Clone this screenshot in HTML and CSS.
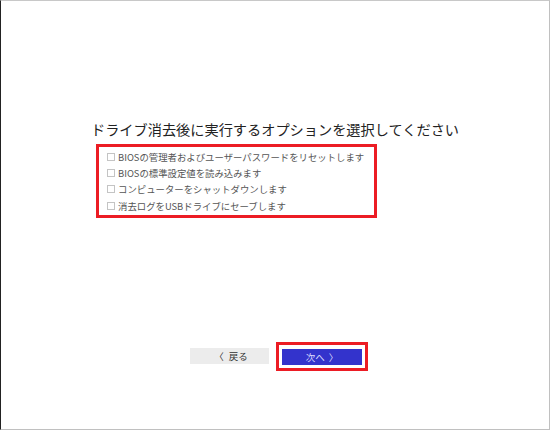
FILE: index.html
```html
<!DOCTYPE html>
<html lang="ja">
<head>
<meta charset="utf-8">
<link rel="stylesheet" href="styles.css">
</head>
<body>
<div class="screen">
  <h1 class="title">ドライブ消去後に実行するオプションを選択してください</h1>
  <div class="options">
    <label class="opt"><span class="box"></span><span>BIOSの管理者およびユーザーパスワードをリセットします</span></label>
    <label class="opt"><span class="box"></span><span>BIOSの標準設定値を読み込みます</span></label>
    <label class="opt"><span class="box"></span><span>コンピューターをシャットダウンします</span></label>
    <label class="opt"><span class="box"></span><span>消去ログをUSBドライブにセーブします</span></label>
  </div>
  <div class="actions">
    <div class="btn back"><span class="chev-l">〈</span>戻る</div>
    <div class="frame"><div class="btn next">次へ<span class="chev-r">〉</span></div></div>
  </div>
</div>
</body>
</html>
```
FILE: styles.css
```css
html, body {
  margin: 0;
  padding: 0;
  background: #ffffff;
}
.screen {
  width: 550px;
  height: 430px;
  box-sizing: border-box;
  border-top: 1px solid #c8c8c8;
  border-right: 1px solid #c0c0c0;
  border-bottom: 1px solid #c0c0c0;
  border-left: 1px solid #222222;
  font-family: "Noto Sans CJK JP", "Noto Sans", sans-serif;
  display: flex;
  flex-direction: column;
}
.title {
  margin: 118px 0 0 0;
  font-size: 14.2px;
  line-height: 20px;
  font-weight: normal;
  color: #222222;
  text-align: center;
}
.options {
  margin: 5px 0 0 95px;
  width: 267px;
  border: 3px solid #ec1c24;
  padding: 1.5px 0 1px 8px;
  display: flex;
  flex-direction: column;
}
.opt {
  display: flex;
  align-items: center;
  height: 16.33px;
  font-size: 9.4px;
  color: #555555;
  white-space: nowrap;
}
.box {
  width: 6px;
  height: 6px;
  border: 1px solid #c4c4c4;
  margin-right: 3px;
  flex: none;
}
.actions {
  margin: 124px 0 0 189px;
  display: flex;
  align-items: center;
  gap: 7px;
}
.btn {
  width: 79px;
  height: 16px;
  display: flex;
  align-items: center;
  justify-content: center;
  font-size: 9.5px;
}
.back {
  background: #ececec;
  color: #333333;
  padding-left: 3px;
  box-sizing: border-box;
}
.chev-l {
  margin-right: 5px;
}
.chev-r {
  margin-left: 4px;
}
.frame {
  border: 3px solid #ec1c24;
  padding: 4px 3px 3px 3px;
}
.next {
  width: 80px;
  background: #3333cc;
  color: #dcdcff;
}
```
